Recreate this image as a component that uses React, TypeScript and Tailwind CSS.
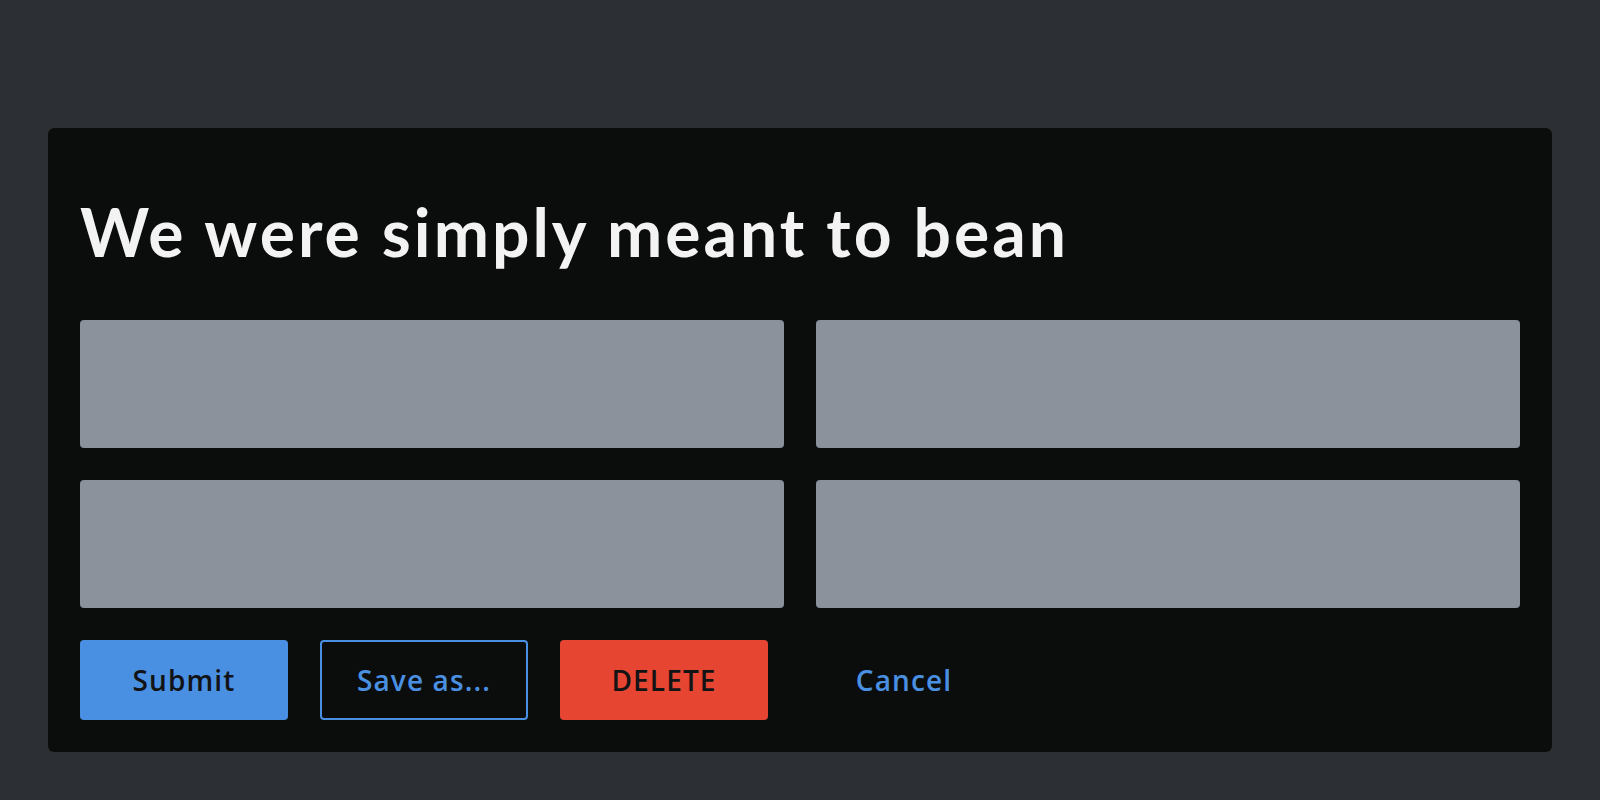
export default function App() {
  const buttonBase =
    'flex h-[80px] w-[208px] items-center justify-center rounded-[4px] text-[28px] font-semibold tracking-[0.04em]';

  return (
    <div
      className="min-h-[800px] w-full bg-[#2c2f34] px-[48px] pt-[128px]"
      style={{ fontFamily: '"Open Sans", "Noto Sans", sans-serif' }}
    >
      <div className="rounded-[6px] bg-[#0b0d0d] p-[32px]">
        <h1
          className="pt-[32px] pb-[48px] text-[66px] leading-[80px] font-bold tracking-[3px] text-[#f3f3f3]"
          style={{ fontFamily: 'Lato, "Open Sans", sans-serif' }}
        >
          We were simply meant to bean
        </h1>

        <div className="grid grid-cols-2 gap-[32px]">
          <div className="h-[128px] rounded-[4px] bg-[#8b929b]" />
          <div className="h-[128px] rounded-[4px] bg-[#8b929b]" />
          <div className="h-[128px] rounded-[4px] bg-[#8b929b]" />
          <div className="h-[128px] rounded-[4px] bg-[#8b929b]" />
        </div>

        <div className="mt-[32px] flex gap-[32px]">
          <button className={`${buttonBase} bg-[#4a90e2] text-[#111315]`}>Submit</button>
          <button className={`${buttonBase} border-2 border-[#4a90e2] text-[#4a90e2]`}>Save as...</button>
          <button className={`${buttonBase} bg-[#e64532] text-[#111315]`}>DELETE</button>
          <button className={`${buttonBase} text-[#4a90e2]`}>Cancel</button>
        </div>
      </div>
    </div>
  );
}
